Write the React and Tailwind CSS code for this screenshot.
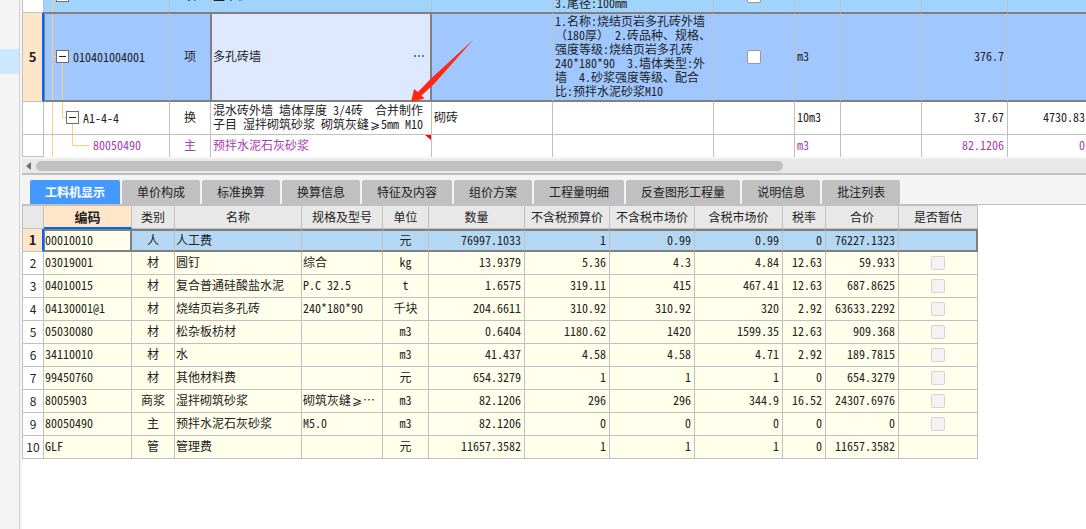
import React from 'react';

const MONO = "font-['Noto_Sans_Mono_CJK_SC','Noto_Sans_CJK_SC',monospace]";

function Toggle({ label }) {
  return (
    <button type="button" aria-label={label} className="relative flex size-[13px] shrink-0 items-center justify-center border border-[#6e6e6e] bg-white">
      <span className="h-px w-[7px] bg-[#222]" />
    </button>
  );
}

function Check({ label, muted }) {
  return (
    <input
      type="checkbox"
      aria-label={label}
      disabled={muted}
      className={
        'block size-3.5 appearance-none rounded-[2px] border ' +
        (muted ? 'border-[#d5d5d5] bg-[#f3f3f3]' : 'border-[#999] bg-white checked:bg-[#4499ff]')
      }
    />
  );
}

// The comparison sign takes a full character cell, like the ideographs around it.
function Text({ children }) {
  const parts = children.split('⩾');
  return parts.map((p, i) => (
    <React.Fragment key={i}>
      {i > 0 && <span className="inline-block w-3 text-center">⩾</span>}
      {p}
    </React.Fragment>
  ));
}

const upperCols = ['w-[22px]', 'w-[126px]', 'w-[41px]', 'w-[221px]', 'w-[121px]', 'w-[161px]', 'w-[81px]', 'w-[46px]', 'w-[81px]', 'w-[86px]', 'w-[81px]'];

const V = 'border-r border-[#c0c0c0] p-0 ';
const SEL = 'border-y-2 border-r border-y-[#808080] border-r-[#c0c0c0] p-0 ';
const ROW = 'border-r border-b border-[#c0c0c0] p-0 ';

function UpperTable() {
  return (
    <div className="overflow-hidden bg-white">
      <table className="w-[1067px] table-fixed border-separate border-spacing-0 leading-[14px]">
        <colgroup>
          {upperCols.map((c, i) => (
            <col key={i} className={c} />
          ))}
        </colgroup>
        <tbody>
          <tr className="h-3 bg-[#a0d4fc]">
            <th className={V + 'border-l bg-white'} />
            <td className={V}>
              <div className="relative flex h-3 items-end overflow-hidden pb-2.5 pl-3">
                <svg className="absolute top-0 left-0" width="40" height="12">
                  <path d="M8.5 0V12" stroke="#ffcc80" />
                </svg>
                <Toggle label="折叠" />
              </div>
            </td>
            <td className={V}>
              <div className="flex h-3 items-end justify-center overflow-hidden pb-2.5">项</div>
            </td>
            <td className={V}>
              <div className="flex h-3 items-end overflow-hidden pb-2.5 pl-0.5">圣木桩</div>
            </td>
            <td className={V} />
            <td className={V}>
              <div className="flex h-3 items-end overflow-hidden pb-0.5 pl-0.5">3.尾径:100mm</div>
            </td>
            <td className={V}>
              <div className="flex h-3 items-end justify-center overflow-hidden pb-[9px]">
                <Check label="选择" />
              </div>
            </td>
            <td className={V} />
            <td className={V} />
            <td className={V} />
            <td className={V} />
          </tr>
          <tr className="h-[90px] bg-[#a0c8ff]">
            <th className="border border-r-2 border-[#c0c0c0] border-r-[#0066ff] bg-[#ffe6c8] p-0 text-center font-['Noto_Sans_CJK_SC',sans-serif] text-[13px] font-bold">5</th>
            <td className={SEL + 'border-l border-l-[#808080]'}>
              <div className="relative flex h-[86px] items-center pb-px pl-[11px]">
                <svg className="absolute top-0 left-0" width="40" height="86">
                  <path d="M7.5 0V86M7.5 42.5H12M17.5 42V86" fill="none" stroke="#ffcc80" />
                </svg>
                <Toggle label="折叠 010401004001" />
                <span className="pl-1">010401004001</span>
              </div>
            </td>
            <td className="border-y-2 border-r border-[#808080] p-0 pb-0.5 text-center">项</td>
            <td className="border-2 border-l border-[#808080] bg-[#dee9ff] p-0 pb-0.5">
              <div className="flex items-center justify-between pr-1.5 pl-px">
                <span>多孔砖墙</span>
                <button type="button" aria-label="更多" className="flex gap-0.5 py-1">
                  <i className="size-0.5 bg-[#4488cc]" />
                  <i className="size-0.5 bg-[#4488cc]" />
                  <i className="size-0.5 bg-[#4488cc]" />
                </button>
              </div>
            </td>
            <td className={SEL} />
            <td className={SEL + 'pb-0.5 pl-0.5 whitespace-pre'}>
              {'1.名称:烧结页岩多孔砖外墙\n（180厚） 2.砖品种、规格、\n强度等级:烧结页岩多孔砖\n240*180*90  3.墙体类型:外\n墙  4.砂浆强度等级、配合\n比:预拌水泥砂浆M10'}
            </td>
            <td className={SEL}>
              <div className="flex justify-center">
                <Check label="选择 010401004001" />
              </div>
            </td>
            <td className={SEL + 'pb-0.5 pl-0.5'}>m3</td>
            <td className={SEL} />
            <td className={SEL + 'pr-[3px] pb-0.5 text-right'}>376.7</td>
            <td className={SEL} />
          </tr>
          <tr className="h-[33px]">
            <th className={ROW + 'border-l'} />
            <td className={ROW}>
              <div className="relative flex h-8 items-center pb-px pl-[22px]">
                <svg className="absolute top-0 left-0" width="60" height="32">
                  <path d="M8.5 0V32M18.5 0V15.5H23M28.5 16V32" fill="none" stroke="#ffcc80" />
                </svg>
                <Toggle label="折叠 A1-4-4" />
                <span className="pl-1">A1-4-4</span>
              </div>
            </td>
            <td className={ROW + 'pb-0.5 text-center'}>换</td>
            <td className={ROW + 'pb-0.5 pl-0.5 whitespace-pre'}>
              <Text>{'混水砖外墙 墙体厚度 3/4砖  合并制作\n子目 湿拌砌筑砂浆 砌筑灰缝⩾5mm M10'}</Text>
            </td>
            <td className={ROW + 'pb-0.5 pl-0.5'}>砌砖</td>
            <td className={ROW} />
            <td className={ROW} />
            <td className={ROW + 'pb-0.5 pl-0.5'}>10m3</td>
            <td className={ROW} />
            <td className={ROW + 'pr-[3px] pb-0.5 text-right'}>37.67</td>
            <td className={ROW + 'pr-[3px] pb-0.5 text-right'}>4730.83</td>
          </tr>
          <tr className="h-[22px] text-[#a83cb4]">
            <th className={ROW + 'border-l'} />
            <td className={V}>
              <div className="relative flex h-[22px] items-center pb-0.5 pl-[49px]">
                <svg className="absolute top-0 left-0" width="60" height="22">
                  <path d="M8.5 0V22M28.5 0V10.5H45" fill="none" stroke="#ffcc80" />
                </svg>
                80050490
              </div>
            </td>
            <td className={V + 'pb-0.5 text-center'}>主</td>
            <td className={V}>
              <div className="relative flex h-[22px] items-center pb-0.5 pl-0.5">
                预拌水泥石灰砂浆
                <svg className="absolute top-0 right-0" width="6" height="5">
                  <path d="M0 0H6V5Z" fill="#f00" />
                </svg>
              </div>
            </td>
            <td className={V} />
            <td className={V} />
            <td className={V} />
            <td className={V + 'pb-0.5 pl-0.5'}>m3</td>
            <td className={V} />
            <td className={V + 'pr-[3px] pb-0.5 text-right'}>82.1206</td>
            <td className={V + 'pr-[3px] pb-0.5 text-right'}>0</td>
          </tr>
        </tbody>
      </table>
    </div>
  );
}

const tabs = ['工料机显示', '单价构成', '标准换算', '换算信息', '特征及内容', '组价方案', '工程量明细', '反查图形工程量', '说明信息', '批注列表'];

const lowerCols = ['w-[22px]', 'w-[88px]', 'w-[43px]', 'w-[127px]', 'w-[81px]', 'w-[46px]', 'w-[96px]', 'w-[85px]', 'w-[85px]', 'w-[88px]', 'w-[43px]', 'w-[73px]', 'w-[79px]'];
const heads = ['编码', '类别', '名称', '规格及型号', '单位', '数量', '不含税预算价', '不含税市场价', '含税市场价', '税率', '合价', '是否暂估'];
const LEFT = 'pb-0.5 pl-px';
const MID = 'pb-0.5 text-center';
const RIGHT = 'pr-[3px] pb-0.5 text-right';
const align = [LEFT, MID, LEFT, LEFT, MID, RIGHT, RIGHT, RIGHT, RIGHT, RIGHT, RIGHT];
const rows = [
  ['00010010', '人', '人工费', '', '元', '76997.1033', '1', '0.99', '0.99', '0', '76227.1323'],
  ['03019001', '材', '圆钉', '综合', 'kg', '13.9379', '5.36', '4.3', '4.84', '12.63', '59.933'],
  ['04010015', '材', '复合普通硅酸盐水泥', 'P.C 32.5', 't', '1.6575', '319.11', '415', '467.41', '12.63', '687.8625'],
  ['04130001@1', '材', '烧结页岩多孔砖', '240*180*90', '千块', '204.6611', '310.92', '310.92', '320', '2.92', '63633.2292'],
  ['05030080', '材', '松杂板枋材', '', 'm3', '0.6404', '1180.62', '1420', '1599.35', '12.63', '909.368'],
  ['34110010', '材', '水', '', 'm3', '41.437', '4.58', '4.58', '4.71', '2.92', '189.7815'],
  ['99450760', '材', '其他材料费', '', '元', '654.3279', '1', '1', '1', '0', '654.3279'],
  ['8005903', '商浆', '湿拌砌筑砂浆', '砌筑灰缝⩾⋯', 'm3', '82.1206', '296', '296', '344.9', '16.52', '24307.6976'],
  ['80050490', '主', '预拌水泥石灰砂浆', 'M5.0', 'm3', '82.1206', '0', '0', '0', '0', '0'],
  ['GLF', '管', '管理费', '', '元', '11657.3582', '1', '1', '1', '0', '11657.3582'],
];

function LowerTable() {
  return (
    <table className="w-[956px] table-fixed border-separate border-spacing-0 leading-[14px]">
      <colgroup>
        {lowerCols.map((c, i) => (
          <col key={i} className={c} />
        ))}
      </colgroup>
      <thead>
        <tr className="h-6 bg-[#e8e8e8]">
          <th className="border border-[#c0c0c0] p-0" />
          {heads.map((h, i) => (
            <th
              key={h}
              className={
                i === 0
                  ? 'border-t border-r border-b-2 border-[#c0c0c0] border-b-[#0066ff] bg-[#ffe6c8] p-0 text-[13px] font-bold'
                  : 'border-y border-r border-[#c0c0c0] p-0 font-normal'
              }
            >
              {h}
            </th>
          ))}
        </tr>
      </thead>
      <tbody>
        {rows.map((r, n) => {
          const sel = n === 0;
          return (
            <tr key={n} className={sel ? 'h-[23px] bg-[#b4d7f4]' : 'h-[23px] bg-[#ffffeb]'}>
              <th
                className={
                  "p-0 text-center font-['Noto_Sans_CJK_SC',sans-serif] " +
                  (sel
                    ? 'border-r-2 border-b border-l border-[#c0c0c0] border-r-[#0066ff] bg-[#ffe6c8] text-[13px] font-bold'
                    : 'border-x border-b border-[#c0c0c0] bg-white font-normal')
                }
              >
                {n + 1}
              </th>
              {r.map((v, i) => (
                <td
                  key={i}
                  className={
                    sel && i === 0
                      ? 'border-y-2 border-r-2 border-l border-[#808080] bg-[#ffffeb] p-0 pb-0.5'
                      : (sel ? SEL : ROW) + align[i]
                  }
                >
                  <Text>{v}</Text>
                </td>
              ))}
              <td className={sel ? 'border-y-2 border-r-2 border-[#808080] p-0' : ROW}>
                {!sel && n < 9 && (
                  <div className="flex justify-center">
                    <Check muted label={'是否暂估 ' + r[2]} />
                  </div>
                )}
              </td>
            </tr>
          );
        })}
      </tbody>
    </table>
  );
}

export default function App() {
  return (
    <div className={'flex h-screen overflow-hidden bg-[#f4f4f4] text-[12px] text-[#222] ' + MONO}>
      <aside className="w-5 shrink-0 border-r border-[#d2d2d2] pt-[49px]">
        <div className="h-[25px] bg-[#cce8ff]" />
      </aside>
      <main className="relative ml-0.5 flex min-w-0 flex-1 flex-col">
        <UpperTable />
        <div className="mt-0.5 flex h-4 shrink-0 items-center border-b-2 border-[#c0c0c0] bg-[#e8e8e8] pl-1">
          <svg width="10" height="8">
            <path d="M5 0V8L0 4Z" fill="#6e6e78" />
          </svg>
          <div className="h-2.5 w-[747px] rounded-full bg-[#c0c0c0]" />
        </div>
        <div role="tablist" className="flex shrink-0 gap-0.5 border-b border-[#c0c0c0] pt-[5px] pl-2 font-['Noto_Sans_CJK_SC',sans-serif]">
          {tabs.map((t, i) => (
            <button
              key={t}
              role="tab"
              type="button"
              aria-selected={i === 0}
              className={
                i === 0
                  ? 'h-6 rounded-t-[2px] bg-[#4499ff] px-[15px] font-bold text-white'
                  : 'h-6 rounded-t-[2px] bg-[#c0c0c0] px-[15px]'
              }
            >
              {t}
            </button>
          ))}
        </div>
        <div className="flex-1 bg-white">
          <LowerTable />
        </div>
        <svg className="pointer-events-none absolute top-[38px] left-[388px]" width="66" height="66" viewBox="0 0 66 66">
          <path d="M63.5 1.5L20 41.5L8 54L4 51L1 64L14.5 60.5L11.5 57.5L24.5 45.5Z" fill="#ff2814" />
        </svg>
      </main>
    </div>
  );
}
